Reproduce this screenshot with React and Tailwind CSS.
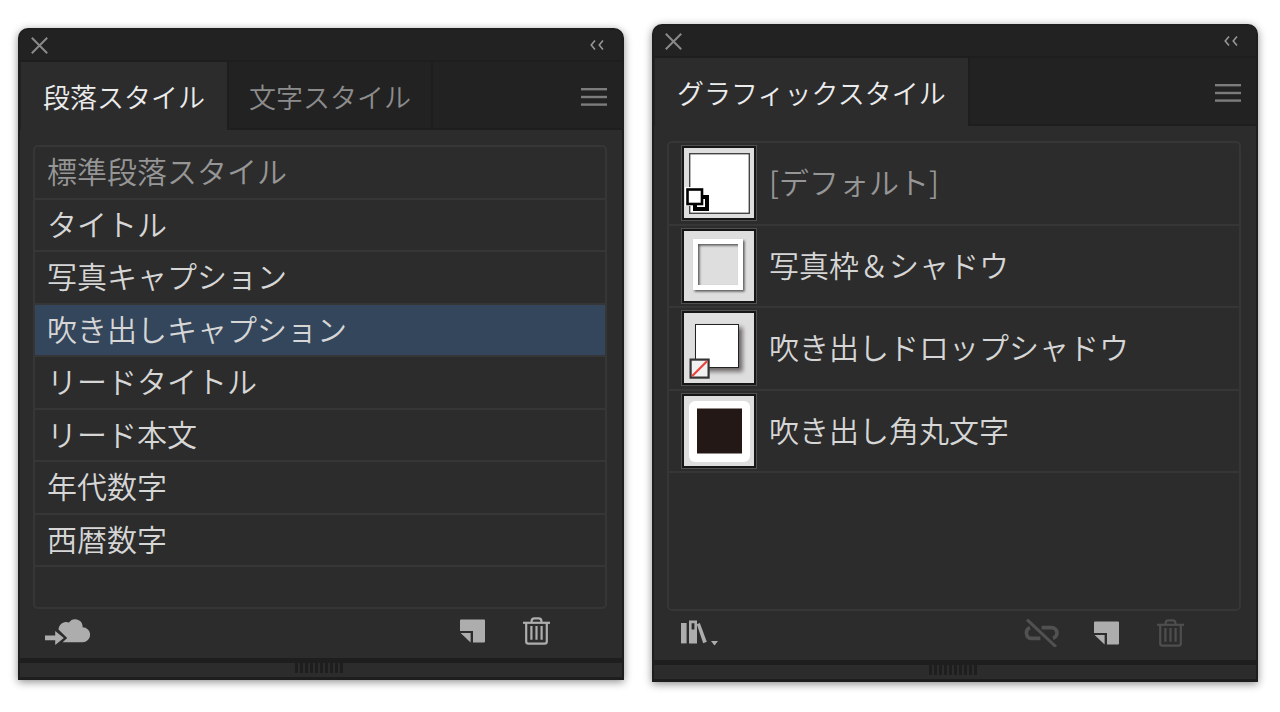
import { useState } from 'react'
import clsx from 'clsx'

const paragraphStyles = [
  { name: '標準段落スタイル', isDefault: true },
  { name: 'タイトル' },
  { name: '写真キャプション' },
  { name: '吹き出しキャプション' },
  { name: 'リードタイトル' },
  { name: 'リード本文' },
  { name: '年代数字' },
  { name: '西暦数字' },
]

const graphicStyles = [
  { name: '[デフォルト]', isDefault: true, Thumb: DefaultThumb },
  { name: '写真枠＆シャドウ', Thumb: FrameThumb },
  { name: '吹き出しドロップシャドウ', Thumb: DropShadowThumb },
  { name: '吹き出し角丸文字', Thumb: RoundedThumb },
]

function CloseIcon() {
  return (
    <svg width="17" height="17" viewBox="0 0 17 17" stroke="#8a8a8a" strokeWidth="2" aria-hidden="true">
      <path d="M0.8 0.8 16.2 16.2M16.2 0.8 0.8 16.2" />
    </svg>
  )
}

function CollapseIcon() {
  return (
    <svg width="14" height="10" viewBox="0 0 14 10" fill="none" stroke="#9a9a9a" strokeWidth="1.5" aria-hidden="true">
      <path d="M5 0.5 1.2 5 5 9.5M13 0.5 9.2 5 13 9.5" />
    </svg>
  )
}

function MenuIcon() {
  return (
    <svg width="26" height="18" viewBox="0 0 26 18" fill="#7c7c7c" aria-hidden="true">
      <rect y="0" width="26" height="2.4" />
      <rect y="7.8" width="26" height="2.4" />
      <rect y="15.4" width="26" height="2.4" />
    </svg>
  )
}

function CloudIcon() {
  return (
    <svg width="45" height="28" viewBox="0 0 45 28" fill="#adadad" aria-hidden="true">
      <path d="M0 18.5H10.2V14L18.8 21 10.2 28V23.3H0Z" />
      <path d="M17.6 25.2 22.2 21 13.5 12.4A7.6 7.6 0 0 1 24 5.6 7.4 7.4 0 0 1 37.6 9V10.2A7.5 7.5 0 0 1 37.6 25.2Z" />
    </svg>
  )
}

function NewIcon() {
  return (
    <svg width="28" height="24" viewBox="0 0 28 24" fill="#adadad" aria-hidden="true">
      <path d="M1 0.5H24Q25 0.5 25 1.5V22.5Q25 23.5 24 23.5H13V12H0V1.5Q0 0.5 1 0.5Z" />
      <path d="M0.6 14H10.6V23.4Z" />
    </svg>
  )
}

function TrashIcon({ color }) {
  return (
    <svg width="27" height="28" viewBox="0 0 27 28" fill="none" stroke={color} strokeWidth="2.2" aria-hidden="true">
      <path d="M0 5.8H27" />
      <path d="M8.6 5.4V4Q8.6 1.3 11.3 1.3H15.7Q18.4 1.3 18.4 4V5.4" />
      <path d="M3.2 6V24.4Q3.2 26.6 5.4 26.6H21.6Q23.8 26.6 23.8 24.4V6" />
      <path d="M8.4 9V22.8M13.5 9V22.8M18.6 9V22.8" />
    </svg>
  )
}

function LibraryIcon() {
  return (
    <svg width="40" height="28" viewBox="0 0 40 28" fill="#adadad" aria-hidden="true">
      <rect x="2" y="4" width="5.6" height="20.4" />
      <path fillRule="evenodd" d="M10 1.6H18V24.4H10ZM12.6 4.2V10.6H15.4V4.2Z" />
      <path d="M17.8 5.2 20.8 4 27.8 22.8 24.2 24.2Z" />
      <path d="M32 22H39L35.5 26.6Z" />
    </svg>
  )
}

function UnlinkIcon() {
  return (
    <svg width="35" height="28" viewBox="0 0 35 28" fill="none" stroke="#515151" strokeWidth="3.6" aria-hidden="true">
      <path d="M3 0.6 32 27.8" strokeWidth="3" />
      <path d="M6 8.8A5.5 5.5 0 0 0 7.4 19.4H16.4" />
      <path d="M17.6 8.6H27.6A5.4 5.4 0 0 1 29 19.2" />
    </svg>
  )
}

function ThumbBase({ children }) {
  return (
    <svg width="76" height="76" viewBox="0 0 76 76" className="shrink-0" aria-hidden="true">
      <rect width="76" height="76" fill="#505050" />
      <rect x="1" y="1" width="74" height="74" fill="#161616" />
      <rect x="3" y="3" width="70" height="70" fill="#dedede" />
      {children}
    </svg>
  )
}

function DefaultThumb() {
  return (
    <ThumbBase>
      <rect x="8.7" y="8.7" width="59.6" height="59.6" fill="#fff" stroke="#444" strokeWidth="1.4" />
      <path d="M4 42H23V49H29V67H11V61H4Z" fill="#fff" />
      <rect x="14" y="52" width="12" height="12" fill="#fff" stroke="#000" strokeWidth="4" />
      <rect x="6.5" y="44.5" width="14.5" height="14.5" fill="#fff" stroke="#000" strokeWidth="2.6" />
    </ThumbBase>
  )
}

function FrameThumb() {
  return (
    <ThumbBase>
      <defs>
        <filter id="frame-shadow" x="-20%" y="-20%" width="140%" height="140%">
          <feDropShadow dx="1.6" dy="1.6" stdDeviation="0.9" floodColor="#000" floodOpacity="0.6" />
        </filter>
      </defs>
      <rect x="14.5" y="13.5" width="45" height="46" fill="none" stroke="#fff" strokeWidth="5" filter="url(#frame-shadow)" />
    </ThumbBase>
  )
}

function DropShadowThumb() {
  return (
    <ThumbBase>
      <defs>
        <filter id="drop-shadow" x="-30%" y="-30%" width="160%" height="160%">
          <feDropShadow dx="3.5" dy="3.5" stdDeviation="2" floodColor="#231815" floodOpacity="0.6" />
        </filter>
      </defs>
      <rect x="14.5" y="14.5" width="43" height="43" fill="#fff" stroke="#222" filter="url(#drop-shadow)" />
      <rect x="9.6" y="49.6" width="18" height="18" fill="#f1f1f1" stroke="#333" strokeWidth="2.2" />
      <path d="M11 66.2 26.2 51" stroke="#ea433c" strokeWidth="2.2" />
    </ThumbBase>
  )
}

function RoundedThumb() {
  return (
    <ThumbBase>
      <rect x="8" y="8" width="61" height="61" rx="6" fill="#fff" />
      <rect x="16" y="15.5" width="45" height="45" fill="#231815" />
    </ThumbBase>
  )
}

function Grip() {
  return (
    <div className="flex h-[14px] justify-center gap-[2px] bg-[#2c2c2c] pr-1">
      {Array.from({ length: 10 }, (_, i) => (
        <span key={i} className="h-[10px] w-[3px] bg-[#1e1e1e]" />
      ))}
    </div>
  )
}

function Panel({ tabs, footer, className, children }) {
  const [activeTab, setActiveTab] = useState(tabs[0])

  return (
    <section
      aria-label={activeTab}
      className={clsx(
        'min-w-0 flex-1 overflow-hidden rounded-t-[10px] border-2 border-b-[3px] border-[#1e1e1e] bg-[#2c2c2c] shadow-[0_2px_8px_rgba(0,0,0,0.45)]',
        className,
      )}
    >
      <header className="flex h-8 items-center justify-between border-b-2 border-[#1e1e1e] bg-[#222222] pr-[18px] pl-[11px]">
        <button type="button" aria-label="閉じる">
          <CloseIcon />
        </button>
        <button type="button" aria-label="折りたたむ">
          <CollapseIcon />
        </button>
      </header>

      <div className="flex h-[68px] items-stretch justify-between bg-[#222222] pl-px">
        <div role="tablist" className="flex">
          {tabs.map((tab) => (
            <button
              key={tab}
              type="button"
              role="tab"
              aria-selected={tab === activeTab}
              onClick={() => setActiveTab(tab)}
              className={clsx(
                'border-r-2 border-[#1e1e1e] text-[27px] leading-9 whitespace-nowrap',
                tab === activeTab
                  ? 'bg-[#2c2c2c] px-[22px] pt-0.5 text-[#ececec]'
                  : 'border-b-2 px-5 pt-1 text-[#8c8c8c]',
              )}
            >
              {tab}
            </button>
          ))}
        </div>
        <div className="flex flex-1 items-center justify-end border-b-2 border-[#1e1e1e] pt-1 pr-[15px]">
          <button type="button" aria-label="パネルメニュー">
            <MenuIcon />
          </button>
        </div>
      </div>

      <div className="pt-[15px] pr-[15px] pl-[13px]">{children}</div>

      <footer className="flex h-[49px] items-start justify-between pt-2 pr-[72px] pl-[25px]">{footer}</footer>

      <div className="border-t-[5px] border-[#1e1e1e] px-px">
        <Grip />
      </div>
    </section>
  )
}

function StyleList({ items, initial, className, rowsClassName }) {
  const [selected, setSelected] = useState(initial)

  return (
    <div className={clsx('rounded-[5px] border-2 border-[#363636]', className)}>
      <ul className={clsx('grid auto-rows-fr', rowsClassName)}>
        {items.map(({ name, isDefault, Thumb }) => (
          <li key={name} className="border-b-2 border-[#363636]">
            <button
              type="button"
              aria-pressed={name === selected}
              onClick={() => setSelected(name)}
              className={clsx(
                'flex h-full w-full items-center gap-3 px-3 text-left text-[30px] leading-9 whitespace-nowrap',
                isDefault ? 'text-[#969696]' : 'text-[#d6d6d6]',
                name === selected && 'bg-[#34465b]',
              )}
            >
              {Thumb && <Thumb />}
              <span className="pb-1">{name}</span>
            </button>
          </li>
        ))}
      </ul>
    </div>
  )
}

function FooterButton({ label, disabled, children }) {
  return (
    <button type="button" aria-label={label} disabled={disabled} className="flex h-7 items-center">
      {children}
    </button>
  )
}

export default function App() {
  return (
    <main className="flex min-h-screen items-start gap-7 bg-white pr-[22px] pb-7 pl-[18px] font-['Noto_Sans_CJK_JP',sans-serif] font-[350]">
      <Panel
        tabs={['段落スタイル', '文字スタイル']}
        className="mt-7"
        footer={
          <>
            <FooterButton label="ライブラリに追加">
              <CloudIcon />
            </FooterButton>
            <div className="flex gap-[35px]">
              <FooterButton label="新規スタイル">
                <NewIcon />
              </FooterButton>
              <FooterButton label="スタイルを削除">
                <TrashIcon color="#adadad" />
              </FooterButton>
            </div>
          </>
        }
      >
        <StyleList
          items={paragraphStyles}
          initial="吹き出しキャプション"
          className="min-h-[464px]"
          rowsClassName="min-h-[420px]"
        />
      </Panel>

      <Panel
        tabs={['グラフィックスタイル']}
        className="mt-6"
        footer={
          <>
            <FooterButton label="グラフィックスタイルライブラリメニュー">
              <LibraryIcon />
            </FooterButton>
            <div className="flex gap-[35px]">
              <FooterButton label="リンクを解除" disabled>
                <UnlinkIcon />
              </FooterButton>
              <FooterButton label="新規スタイル">
                <NewIcon />
              </FooterButton>
              <FooterButton label="スタイルを削除" disabled>
                <TrashIcon color="#4e4e4e" />
              </FooterButton>
            </div>
          </>
        }
      >
        <StyleList items={graphicStyles} className="min-h-[470px]" rowsClassName="min-h-[330px]" />
      </Panel>
    </main>
  )
}
